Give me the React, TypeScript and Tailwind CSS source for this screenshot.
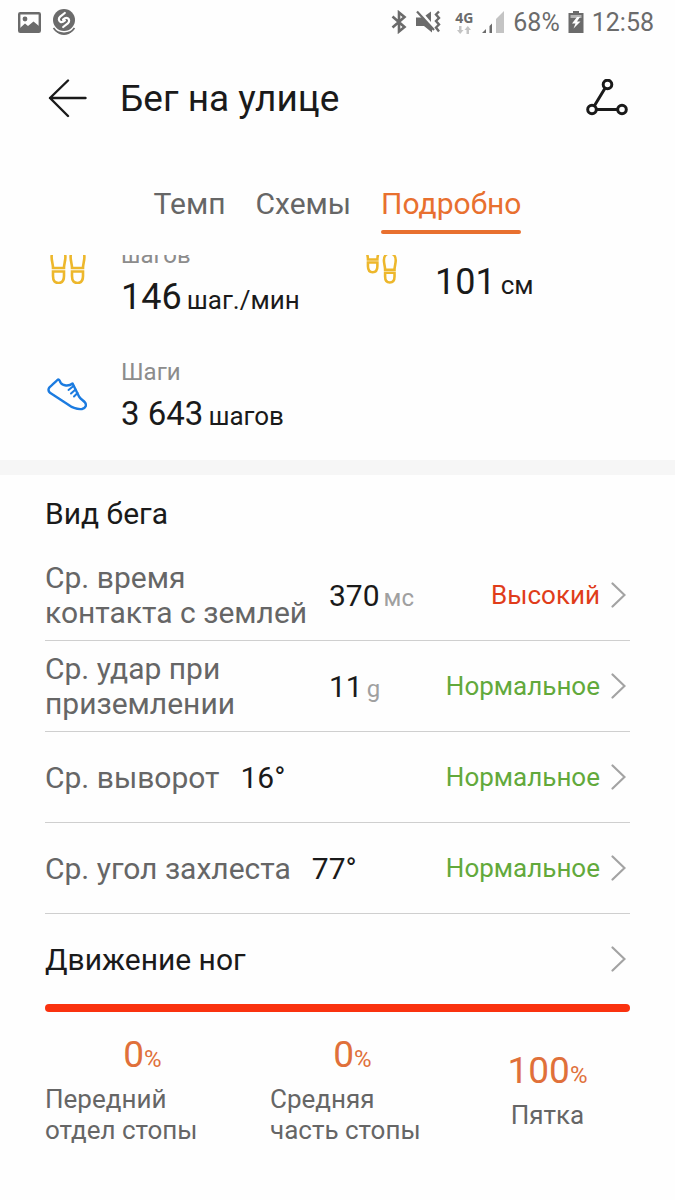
import clsx from "clsx";
import type { ReactNode } from "react";

interface RunMetric {
  label: string;
  value: string;
  unit?: string;
  status: string;
  isHigh?: boolean;
}

interface StrikeShare {
  label: string;
  percent: number;
}

const TABS = ["Темп", "Схемы", "Подробно"];
const ACTIVE_TAB = "Подробно";

const METRICS: RunMetric[] = [
  {
    label: "Ср. время контакта с землей",
    value: "370",
    unit: "мс",
    status: "Высокий",
    isHigh: true,
  },
  {
    label: "Ср. удар при приземлении",
    value: "11",
    unit: "g",
    status: "Нормальное",
  },
  { label: "Ср. выворот", value: "16°", status: "Нормальное" },
  { label: "Ср. угол захлеста", value: "77°", status: "Нормальное" },
];

const STRIKES: StrikeShare[] = [
  { label: "Передний отдел стопы", percent: 0 },
  { label: "Средняя часть стопы", percent: 0 },
  { label: "Пятка", percent: 100 },
];

function StatusBar() {
  return (
    <div className="flex h-11 items-center justify-between pr-[21px] pl-[18px] text-[25px] leading-none text-[#6b6b6b]">
      <div className="flex items-center gap-[11px]">
        <svg width="23" height="21" viewBox="0 0 23 21" fill="none">
          <rect x="1.2" y="1.2" width="20.6" height="18.6" rx="1" stroke="currentColor" strokeWidth="2.4" />
          <circle cx="7" cy="7" r="2.4" fill="currentColor" />
          <path d="M2 16 L7 11.5 L10 14 L15.5 9.5 L21 14 V19 H2Z" fill="currentColor" />
        </svg>
        <svg width="24" height="28" viewBox="0 0 24 28" fill="none">
          <circle cx="12" cy="12" r="11" fill="currentColor" />
          <path
            d="M12.8 5 L8.2 8.7 C6.2 10.4 6.6 12.8 8.3 13.8 C10 14.8 11.5 13.7 12.9 12.4 M11.2 19 L15.8 15.3 C17.8 13.6 17.4 11.2 15.7 10.2 C14 9.2 12.4 10.3 11.1 11.6"
            stroke="#fff"
            strokeWidth="2.2"
            strokeLinecap="round"
          />
          <path d="M1.5 20 C6 27 18 27 22.5 20" stroke="currentColor" strokeWidth="1.6" />
          <path d="M3 22.5 C8 28.5 16 28.5 21 22.5 C16 26 8 26 3 22.5Z" fill="currentColor" />
        </svg>
      </div>
      <div className="flex items-center">
        <svg width="16" height="24" viewBox="0 0 16 24" fill="none" stroke="currentColor" strokeWidth="2.6">
          <path d="M1.5 6.5 L13.5 17 L8 21.5 V2.5 L13.5 7 L1.5 17.5" />
        </svg>
        <svg className="ml-2" width="26" height="24" viewBox="0 0 26 24" fill="none">
          <path d="M1 7.5 H7 L17 18 V22.5 L9 16 H1Z" fill="currentColor" />
          <path d="M10.5 5.5 L16 1.5 V12Z" fill="currentColor" />
          <path d="M2 1.5 L19 20" stroke="currentColor" strokeWidth="2.2" />
          <path d="M24 1.5 L21 4.5 L24 8 L21 11 L24 14.5 L21 17.5 L24 21.5" stroke="currentColor" strokeWidth="2.4" />
        </svg>
        <div className="ml-[14px] flex flex-col items-center gap-px">
          <span className="font-['Open_Sans',sans-serif] text-[14px] leading-[14px] font-bold">4G</span>
          <svg width="14" height="8" viewBox="0 0 14 8" fill="#c4c4c4">
            <path d="M2 0 H4.5 V4 H6.5 L3.2 8 L0 4 H2Z M9.5 8 H12 V4 H14 L10.8 0 L7.5 4 H9.5Z" />
          </svg>
        </div>
        <svg className="ml-2" width="24" height="24" viewBox="0 0 24 24">
          <path d="M1 23 L5 19 V23Z M8.5 16 L11 13.5 V23 H8.5Z" fill="currentColor" />
          <path d="M15 9 L23 1 V23 H15Z" fill="#c4c4c4" />
        </svg>
        <span className="ml-2">68%</span>
        <svg className="ml-2" width="16" height="24" viewBox="0 0 16 24">
          <path d="M5 1 H11 V3 H15.5 V23 H0.5 V3 H5Z" fill="currentColor" />
          <path d="M2.5 5 H13.5 V8 H2.5Z" fill="#b5b5b5" />
          <path d="M9 7 L4 13.5 H7.5 L5.5 18.5 L12.5 11.5 H9 L12 7Z" fill="#fff" />
        </svg>
        <span className="ml-2">12:58</span>
      </div>
    </div>
  );
}

function Foot({ x, y }: { x: number; y: number }) {
  return (
    <g transform={`translate(${x} ${y})`}>
      <path d="M0.6 8 C0.6 2.5 4 0 7.5 0 S14.4 2.5 14.4 8 C14.4 12 13 15 13 19 H2 C2 15 0.6 12 0.6 8Z" />
      <path d="M2 22.5 H13 V27 C13 32 11 34 7.5 34 S2 32 2 27Z" />
    </g>
  );
}

function CadenceIcon() {
  return (
    <svg className="size-10 shrink-0" viewBox="0 0 40 40" fill="none" stroke="#edb72b" strokeWidth="2.6">
      <Foot x={4} y={5} />
      <Foot x={23} y={5} />
    </svg>
  );
}

function StrideIcon() {
  return (
    <svg className="size-10 shrink-0" viewBox="0 0 40 42" fill="none" stroke="#edb72b" strokeWidth="3">
      <g transform="scale(0.9)">
        <Foot x={5} y={-1} />
        <Foot x={25} y={11} />
      </g>
    </svg>
  );
}

function ShoeIcon() {
  return (
    <svg
      className="size-10 shrink-0"
      viewBox="0 0 40 40"
      fill="none"
      stroke="#1b7be0"
      strokeWidth="2.4"
      strokeLinecap="round"
      strokeLinejoin="round"
    >
      <path d="M11 3.5 C10 4.5 3.5 10 2 12 C1 14 1.5 15.5 3 16.8 L21 28.5 C25 31.5 30 33.5 35 33 C39 32 39.8 29 38 26.5 C36.5 24.5 34 23.5 32 20.5 L25.6 7.5 C22 10.5 15.5 10 13.5 6.5 C13 5 12.5 3.5 11 3.5Z" />
      <path d="M26.5 10 L21.5 14 M28.5 13.5 L24 17.5 M30.5 17 L27 20.5" strokeWidth="2" />
    </svg>
  );
}

function Chevron() {
  return (
    <svg
      className="shrink-0"
      width="15"
      height="26"
      viewBox="0 0 15 26"
      fill="none"
      stroke="#a3a3a3"
      strokeWidth="2.2"
      strokeLinecap="round"
    >
      <path d="M1.5 1.5 L13.5 13 L1.5 24.5" />
    </svg>
  );
}

interface StatProps {
  icon: ReactNode;
  label?: string;
  value: string;
  unit: string;
  className?: string;
  isLong?: boolean;
}

function Stat({ icon, label, value, unit, className, isLong }: StatProps) {
  return (
    <div className="flex items-center gap-[34px]">
      {icon}
      <div className={className}>
        {label && <p className="mb-[6px] text-[24px] leading-[30px] text-[#8c8c8c]">{label}</p>}
        <p className="flex items-baseline gap-[5px] whitespace-nowrap text-[#1a1a1a]">
          <span className={clsx("leading-[42px]", isLong ? "text-[33px]" : "text-[36px]")}>{value}</span>
          <span className="text-[26px] leading-[30px]">{unit}</span>
        </p>
      </div>
    </div>
  );
}

function MetricRow({ metric }: { metric: RunMetric }) {
  return (
    <li className="border-b border-[#cfcfcf]">
      <button type="button" className="flex h-[90px] w-full items-center pr-1 text-left">
        <span className="max-w-[263px] text-[30px] leading-[35px] text-[#666]">{metric.label}</span>
        <span className="ml-[21px] flex items-baseline gap-1 text-[30px] text-[#1a1a1a]">
          {metric.value}
          {metric.unit && <span className="text-[24px] text-[#a0a0a0]">{metric.unit}</span>}
        </span>
        <span
          className={clsx(
            "mr-[11px] ml-auto text-[26px]",
            metric.isHigh ? "text-[#e03c1a]" : "text-[#62a93b]",
          )}
        >
          {metric.status}
        </span>
        <Chevron />
      </button>
    </li>
  );
}

export default function App() {
  return (
    <div className="min-h-screen bg-[#fefefe] font-[Roboto,sans-serif]">
      <StatusBar />

      <header className="flex h-[110px] items-center pr-[47px] pl-12 text-[#1a1a1a]">
        <button type="button" aria-label="Назад">
          <svg
            width="40"
            height="40"
            viewBox="0 0 40 40"
            fill="none"
            stroke="currentColor"
            strokeWidth="2.4"
            strokeLinecap="round"
            strokeLinejoin="round"
          >
            <path d="M20 1.5 L2 19 L20 37 M2 19 H37.5" />
          </svg>
        </button>
        <h1 className="ml-[32px] text-[37px] leading-[42px]">Бег на улице</h1>
        <button type="button" aria-label="Маршрут" className="ml-auto">
          <svg width="42" height="40" viewBox="0 0 42 40" fill="none" stroke="currentColor" strokeWidth="3">
            <circle cx="21.5" cy="5.5" r="4.3" />
            <circle cx="6" cy="30.5" r="4.3" />
            <circle cx="36" cy="30.5" r="4.3" />
            <path d="M19 9.3 L8.4 26.7 M10.4 30.5 H31.6" />
          </svg>
        </button>
      </header>

      <nav className="flex h-[101px] justify-center gap-[30px] pt-8">
        {TABS.map((tab) => (
          <button
            key={tab}
            type="button"
            className={clsx(
              "flex h-12 flex-col justify-between text-[30px] leading-[36px]",
              tab === ACTIVE_TAB ? "text-[#e8702f]" : "text-[#666]",
            )}
          >
            {tab}
            {tab === ACTIVE_TAB && <span className="h-1 w-full rounded-full bg-[#e8702f]" />}
          </button>
        ))}
      </nav>

      <main className="overflow-hidden">
        {/* scrolled: the first row is partly under the tabs */}
        <section className="-mt-[45px] grid grid-cols-2 gap-y-[39px] pb-[25px] pl-[47px]">
          <Stat icon={<CadenceIcon />} label="шагов" value="146" unit="шаг./мин" className="pt-[30px]" />
          <Stat icon={<StrideIcon />} value="101" unit="см" className="pt-[36px]" />
          <Stat icon={<ShoeIcon />} label="Шаги" value="3 643" unit="шагов" isLong />
        </section>

        <div className="h-[15px] bg-[#f6f6f6]" />

        <section className="px-[45px] pt-[21px]">
          <h2 className="text-[30px] leading-[36px] text-[#1a1a1a]">Вид бега</h2>
          <ul className="mt-[18px]">
            {METRICS.map((metric) => (
              <MetricRow key={metric.label} metric={metric} />
            ))}
          </ul>

          <button
            type="button"
            className="flex h-[90px] w-full items-center justify-between pr-1 text-[30px] text-[#1a1a1a]"
          >
            Движение ног
            <Chevron />
          </button>

          <div className="flex h-2 overflow-hidden rounded-full bg-[#f6f6f6]">
            {STRIKES.map((strike) => (
              <div
                key={strike.label}
                className="bg-[#fa320f]"
                style={{ width: `${strike.percent}%` }}
              />
            ))}
          </div>

          <div className="grid grid-cols-3 pt-[22px] pb-12">
            {STRIKES.map((strike, i) => (
              <div
                key={strike.label}
                className={clsx("flex flex-col items-center justify-center", i > 0 && "pl-[30px]")}
              >
                <p className="text-[37px] leading-[42px] text-[#e0703a]">
                  {strike.percent}
                  <span className="text-[24px]">%</span>
                </p>
                <p className="mt-1 text-[26px] leading-[31px] text-[#666]">{strike.label}</p>
              </div>
            ))}
          </div>
        </section>
      </main>
    </div>
  );
}
